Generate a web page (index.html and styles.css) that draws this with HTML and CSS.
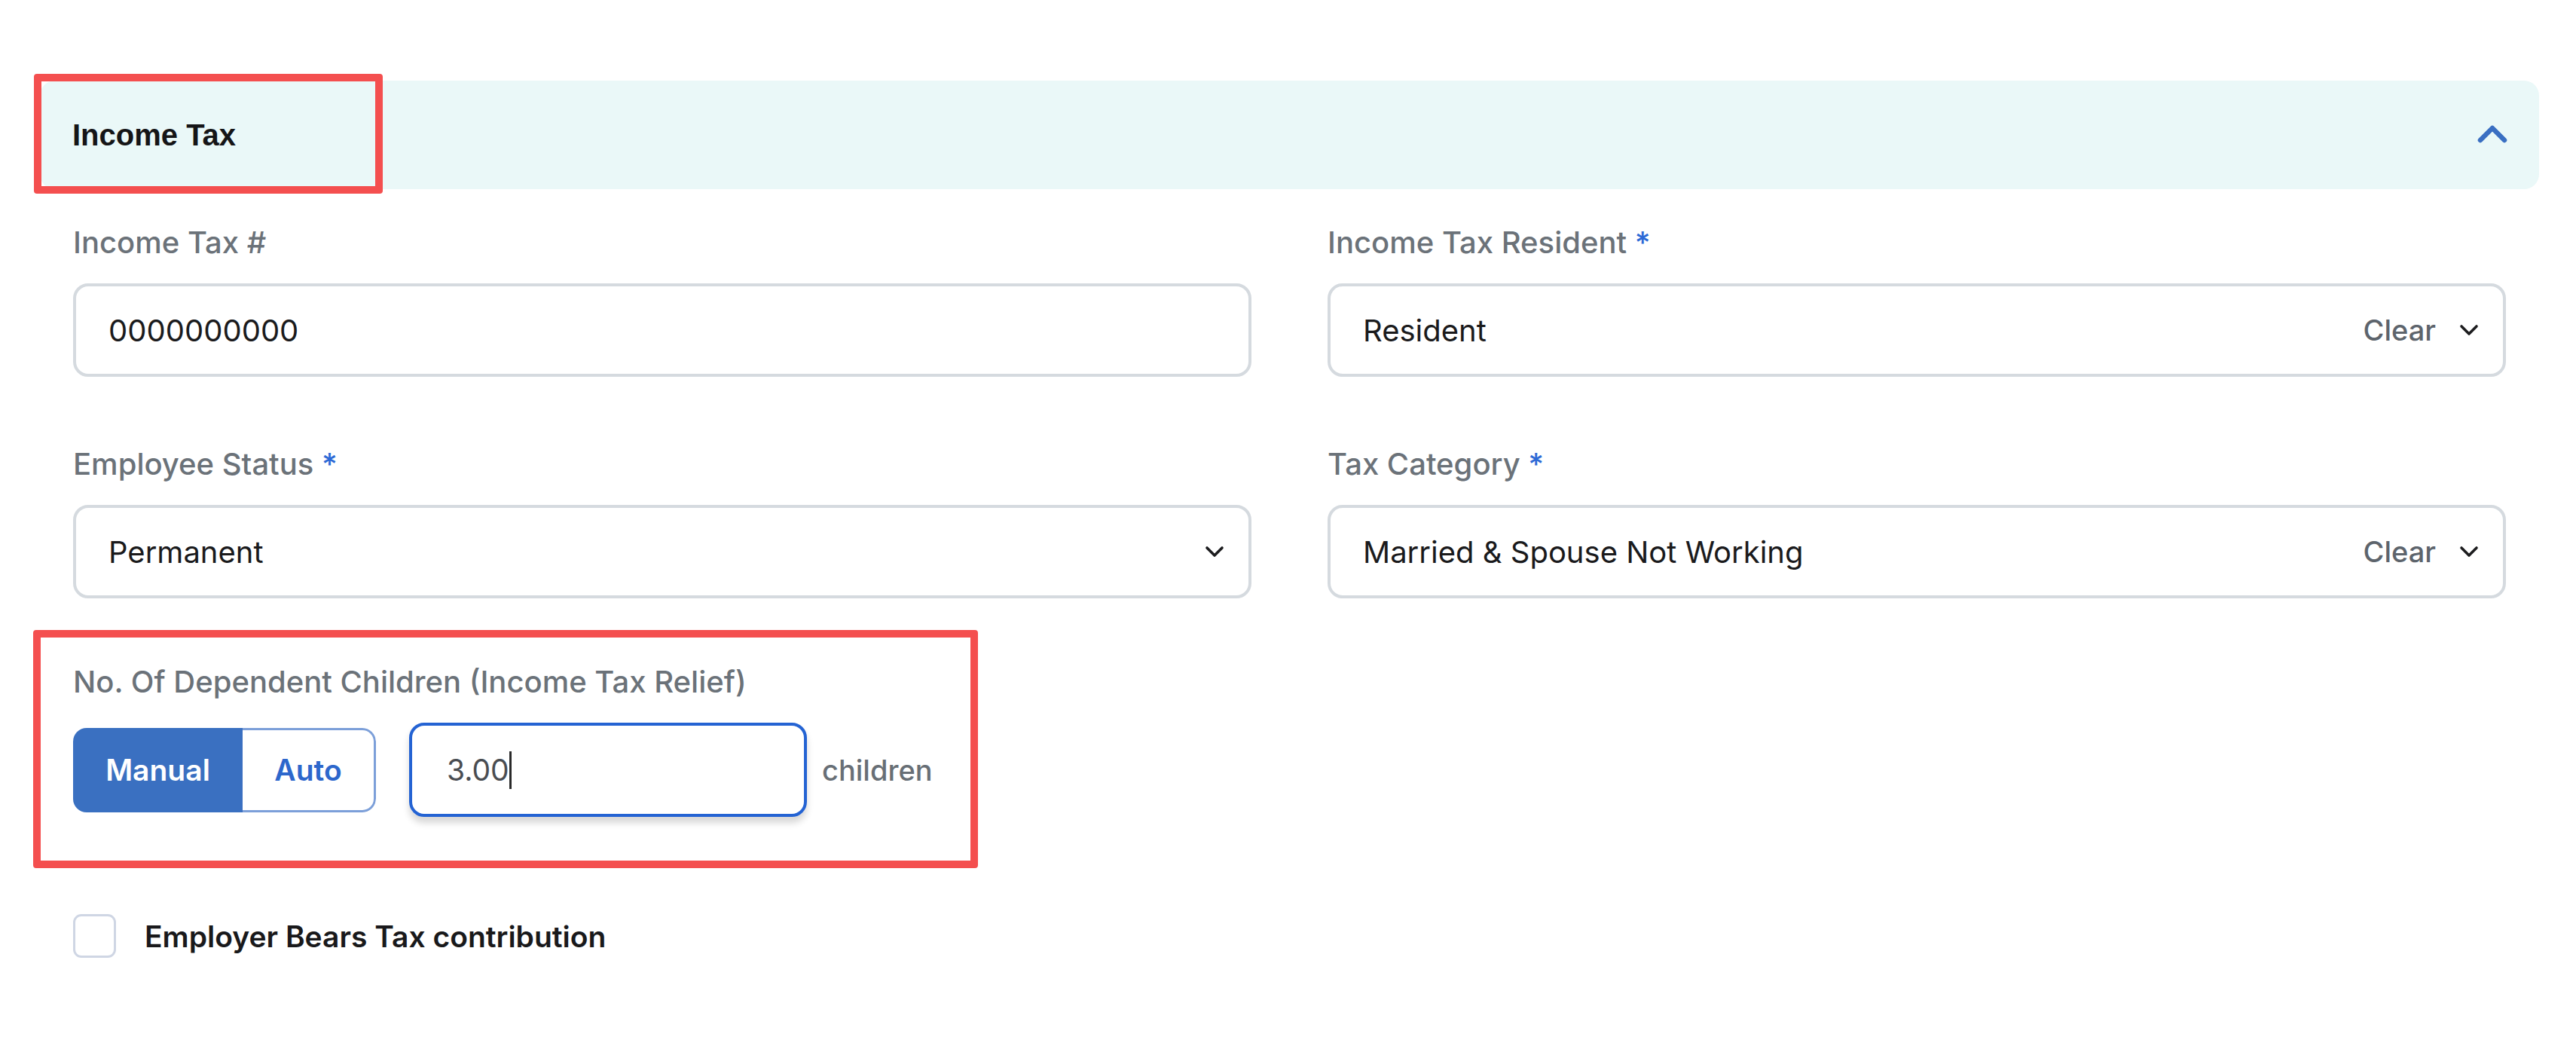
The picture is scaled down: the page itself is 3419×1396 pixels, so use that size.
FILE: index.html
```html
<!DOCTYPE html>
<html lang="en">
<head>
<meta charset="utf-8">
<title>Income Tax</title>
<link rel="stylesheet" href="styles.css">
</head>
<body>
<div class="page">
  <div class="section-header">
    <span class="section-title">Income Tax</span>
    <svg class="chev-up" viewBox="0 0 40 26" width="40" height="26"><path d="M4 22 L20 6 L36 22" fill="none" stroke="#3a6fc2" stroke-width="6.5" stroke-linecap="round" stroke-linejoin="round"/></svg>
  </div>

  <div class="form">
    <div class="grid">
      <div class="field">
        <div class="label">Income Tax #</div>
        <div class="control"><span class="value">0000000000</span></div>
      </div>
      <div class="field">
        <div class="label">Income Tax Resident <span class="req">*</span></div>
        <div class="control">
          <span class="value">Resident</span>
          <span class="actions"><span class="clear">Clear</span><svg class="chev-down" viewBox="0 0 26 16" width="26" height="16"><path d="M3 3 L13 13 L23 3" fill="none" stroke="#1d1d1f" stroke-width="3.6" stroke-linecap="round" stroke-linejoin="round"/></svg></span>
        </div>
      </div>
      <div class="field">
        <div class="label">Employee Status <span class="req">*</span></div>
        <div class="control">
          <span class="value">Permanent</span>
          <span class="actions"><svg class="chev-down" viewBox="0 0 26 16" width="26" height="16"><path d="M3 3 L13 13 L23 3" fill="none" stroke="#1d1d1f" stroke-width="3.6" stroke-linecap="round" stroke-linejoin="round"/></svg></span>
        </div>
      </div>
      <div class="field">
        <div class="label">Tax Category <span class="req">*</span></div>
        <div class="control">
          <span class="value">Married &amp; Spouse Not Working</span>
          <span class="actions"><span class="clear">Clear</span><svg class="chev-down" viewBox="0 0 26 16" width="26" height="16"><path d="M3 3 L13 13 L23 3" fill="none" stroke="#1d1d1f" stroke-width="3.6" stroke-linecap="round" stroke-linejoin="round"/></svg></span>
        </div>
      </div>
    </div>

    <div class="children-field">
      <div class="label">No. Of Dependent Children (Income Tax Relief)</div>
      <div class="children-row">
        <div class="toggle">
          <span class="seg seg-on">Manual</span>
          <span class="seg seg-off">Auto</span>
        </div>
        <div class="num-input"><span class="num-value">3.00</span><span class="caret"></span></div>
        <span class="unit">children</span>
      </div>
    </div>

    <div class="check-row">
      <span class="checkbox"></span>
      <span class="check-label">Employer Bears Tax contribution</span>
    </div>
  </div>

  <div class="annot annot-header"></div>
  <div class="annot annot-children"></div>
</div>
</body>
</html>
```

FILE: styles.css
```css
* { box-sizing: border-box; }
html, body { margin: 0; padding: 0; background: #ffffff; }
body {
  font-family: Inter, Lato, "Noto Sans", "Liberation Sans", sans-serif;
  color: #1b1b1d;
}
.page {
  position: relative;
  width: 3419px;
  height: 1396px;
  padding: 107px 49px 0 53px;
}
.section-header {
  height: 144px;
  background: #eaf8f8;
  border-radius: 20px;
  display: flex;
  align-items: center;
  justify-content: space-between;
  padding: 0 42px 0 43px;
}
.section-title {
  font-family: "Liberation Sans", Arial, sans-serif;
  font-weight: 700;
  font-size: 40px;
  color: #151517;
}
.chev-up { display: block; margin-top: -4px; }

.form { padding: 0 44px; }
.grid {
  display: grid;
  grid-template-columns: 1fr 1fr;
  column-gap: 101px;
  row-gap: 92px;
  margin-top: 47px;
}
.label {
  font-size: 40px;
  line-height: 48px;
  font-weight: 500;
  color: #6b7279;
  margin-bottom: 30px;
}
.req { color: #2d6ad6; }
.control {
  height: 124px;
  border: 4px solid #d5dadf;
  border-radius: 20px;
  display: flex;
  align-items: center;
  justify-content: space-between;
  padding: 0 32px 0 43px;
  font-size: 40px;
  color: #1a1a1c;
}
.actions { display: flex; align-items: center; gap: 31px; }
.clear { color: #5d646c; font-size: 38px; font-weight: 500; }
.chev-down { display: block; }

.children-field { margin-top: 87px; }
.children-row {
  display: flex;
  align-items: center;
}
.toggle {
  display: flex;
  height: 112px;
  border-radius: 18px;
  overflow: hidden;
}
.seg {
  display: flex;
  align-items: center;
  justify-content: center;
  font-size: 39px;
  font-weight: 600;
}
.seg-on {
  width: 225px;
  background: #3a70c1;
  color: #ffffff;
}
.seg-off {
  width: 177px;
  color: #2d67cc;
  border: 3px solid #7c9fd9;
  border-left: none;
  border-radius: 0 18px 18px 0;
}
.num-input {
  margin-left: 44px;
  width: 528px;
  height: 125px;
  border: 4px solid #2463d3;
  border-radius: 20px;
  box-shadow: 0 8px 10px rgba(0, 0, 0, 0.16);
  display: flex;
  align-items: center;
  padding-left: 46px;
  font-size: 39px;
  color: #4a4d52;
}
.caret {
  display: inline-block;
  width: 3px;
  height: 50px;
  background: #2a2a2a;
}
.unit {
  margin-left: 20px;
  font-size: 38px;
  font-weight: 500;
  color: #686f76;
}

.check-row {
  margin-top: 129px;
  display: flex;
  align-items: center;
  gap: 38px;
}
.checkbox {
  width: 57px;
  height: 58px;
  border: 3px solid #cfd6e4;
  border-radius: 11px;
  background: #ffffff;
}
.check-label {
  font-size: 39px;
  font-weight: 600;
  color: #19191b;
}

.annot {
  position: absolute;
  border: 10px solid #f44f4f;
  border-radius: 4px;
  pointer-events: none;
}
.annot-header { left: 45px; top: 98px; width: 463px; height: 159px; }
.annot-children { left: 44px; top: 836px; width: 1254px; height: 316px; }
```
